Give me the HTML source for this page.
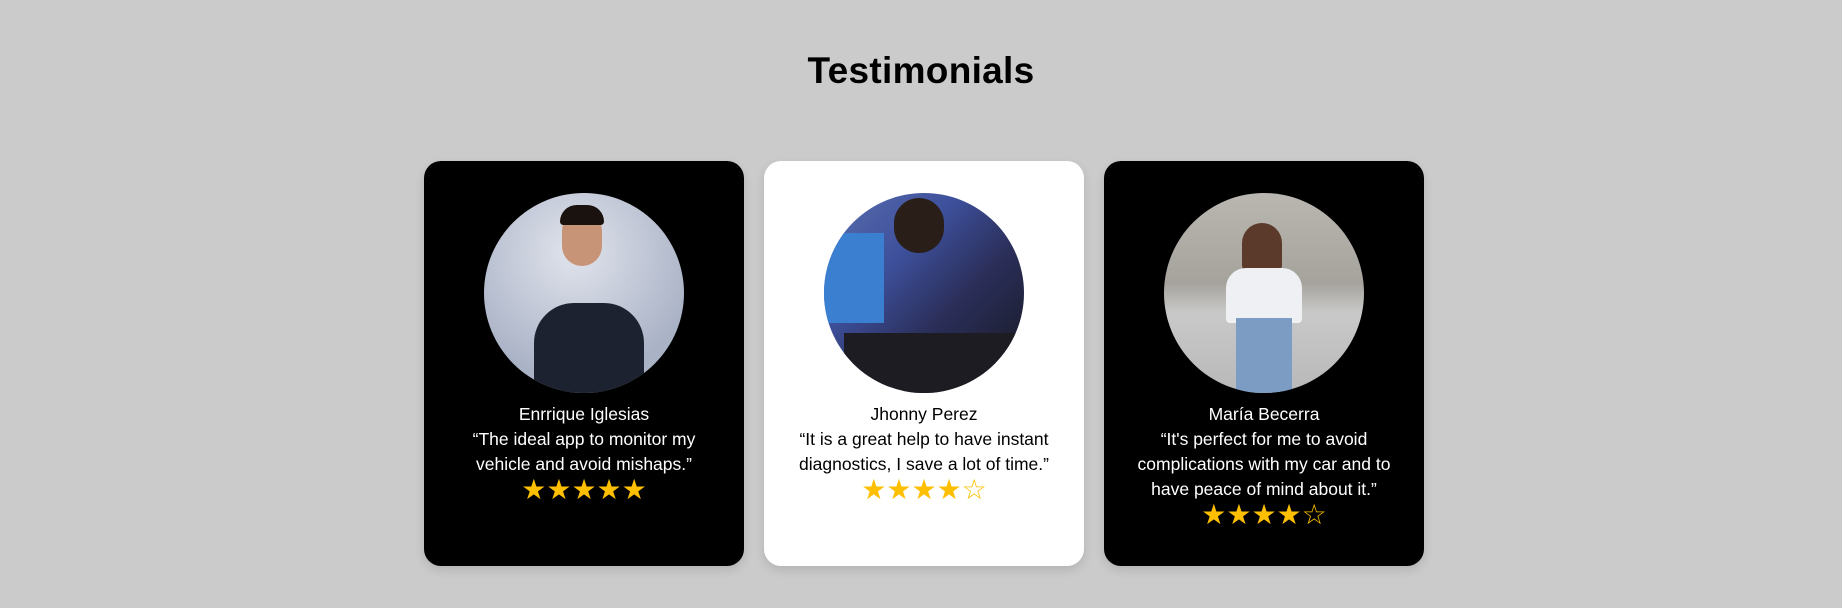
<!DOCTYPE html>
<html><head><meta charset="utf-8"><style>
body{margin:0;width:1842px;height:608px;background:#cbcbcb;font-family:"Liberation Sans",sans-serif;position:relative;overflow:hidden}
h1{position:absolute;top:50px;left:0;width:100%;text-align:center;margin:0;font-size:37px;font-weight:bold;color:#000;letter-spacing:0.3px}
.card{position:absolute;top:161px;width:320px;height:405px;border-radius:17px;box-shadow:0 4px 10px rgba(0,0,0,0.12);text-align:center}
.b{background:#000;color:#fff}.w{background:#fff;color:#000}
.av{position:absolute;left:60px;top:32px;width:200px;height:200px;border-radius:50%;overflow:hidden}
.txt{position:absolute;top:241px;left:0;width:100%;font-size:17.5px;line-height:25px}
.stars{color:#fdbf00;font-size:28px;line-height:26px;letter-spacing:0px}
</style></head><body>
<h1>Testimonials</h1>
<div class="card b" style="left:424px">
 <div class="av" style="background:radial-gradient(circle at 45% 30%,#e0e4ec,#aab2c6 70%)">
  <div style="position:absolute;left:50px;top:110px;width:110px;height:100px;background:#1c2230;border-radius:40px 40px 0 0"></div>
  <div style="position:absolute;left:78px;top:18px;width:40px;height:55px;background:#c89478;border-radius:20px"></div>
  <div style="position:absolute;left:76px;top:12px;width:44px;height:20px;background:#1a120e;border-radius:20px 20px 4px 4px"></div>
 </div>
 <div class="txt">Enrrique Iglesias<br>“The ideal app to monitor my<br>vehicle and avoid mishaps.”<div class="stars">★★★★★</div></div>
</div>
<div class="card w" style="left:764px">
 <div class="av" style="background:linear-gradient(135deg,#5a6fb0 0%,#3d4f9a 35%,#2b2f5a 60%,#15161c 100%)">
  <div style="position:absolute;left:0;top:40px;width:60px;height:90px;background:#3b7fd0"></div>
  <div style="position:absolute;left:70px;top:5px;width:50px;height:55px;background:#2a1e18;border-radius:25px"></div>
  <div style="position:absolute;left:20px;top:140px;width:180px;height:60px;background:#1c1c22"></div>
 </div>
 <div class="txt">Jhonny Perez<br>“It is a great help to have instant<br>diagnostics, I save a lot of time.”<div class="stars">★★★★☆</div></div>
</div>
<div class="card b" style="left:1104px">
 <div class="av" style="background:linear-gradient(180deg,#b9b7b0 0%,#a6a39d 45%,#c9c9c9 60%,#b8b8b8 100%)">
  <div style="position:absolute;left:78px;top:30px;width:40px;height:50px;background:#5b3a2c;border-radius:20px 20px 8px 8px"></div>
  <div style="position:absolute;left:62px;top:75px;width:76px;height:55px;background:#eef0f4;border-radius:20px 20px 4px 4px"></div>
  <div style="position:absolute;left:72px;top:125px;width:56px;height:80px;background:#7d9cc4"></div>
 </div>
 <div class="txt">María Becerra<br>“It's perfect for me to avoid<br>complications with my car and to<br>have peace of mind about it.”<div class="stars">★★★★☆</div></div>
</div>
</body></html>
